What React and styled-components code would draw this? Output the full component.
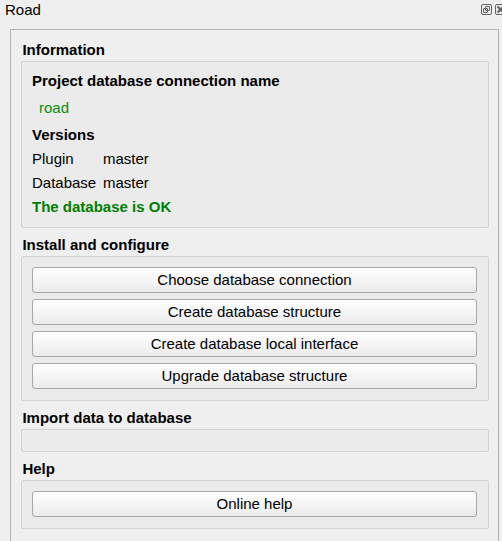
import React from "react";
import styled, { createGlobalStyle } from "styled-components";

const GlobalStyle = createGlobalStyle`
  * { box-sizing: border-box; }
  body {
    margin: 0;
    background: #efefef;
    color: #000;
    font: 15px/24px "Liberation Sans", Arial, sans-serif;
    overflow: hidden;
  }
`;

const Dock = styled.div`
  width: 502px;
  height: 541px;
  display: flex;
  flex-direction: column;
  overflow: hidden;
  background: #efefef;
`;

const TitleBar = styled.header`
  flex: none;
  height: 29px;
  padding: 0 0 0 5px;
  display: flex;
  align-items: flex-start;
  justify-content: space-between;
  overflow: hidden;
`;

const Title = styled.span`
  line-height: 20px;
`;

const Controls = styled.div`
  width: 21px;
  margin-top: 4px;
  display: flex;
  gap: 3px;
  overflow: hidden;
`;

const ControlIcon = styled.svg`
  flex: none;
  display: block;
  width: 11px;
  height: 11px;
`;

const Frame = styled.main`
  flex: none;
  width: 489px;
  height: 530px;
  margin-left: 10px;
  padding: 8px 9px 0 10px;
  border: 1px solid #b3b3b3;
`;

const Section = styled.section`
  margin-bottom: ${(p) => p.$gap}px;
`;

const SectionTitle = styled.h2`
  margin: 0;
  padding-left: 1.4px;
  height: 23px;
  font-size: 15px;
  line-height: 24px;
  font-weight: bold;
`;

const GroupBox = styled.div`
  height: ${(p) => p.$height}px;
  padding: ${(p) => p.$top || 10}px 11px 0 10px;
  display: flex;
  flex-direction: column;
  gap: ${(p) => p.$gap || 0}px;
  border: 1px solid #d3d3d3;
  border-radius: 2px;
  background: #ebebeb;
`;

const Label = styled.strong`
  height: ${(p) => p.$height || 24}px;
  color: ${(p) => (p.$ok ? "#008000" : "#000")};
`;

const ConnectionName = styled.span`
  height: 27px;
  padding-left: 7px;
  color: #0b8c0b;
`;

const Versions = styled.div`
  display: grid;
  grid-template-columns: 71px auto;
  grid-auto-rows: 24px;
`;

const Button = styled.button`
  flex: none;
  width: 100%;
  height: 26px;
  padding: 0;
  border: 1px solid #a8a8a8;
  border-radius: 3px;
  background: linear-gradient(#ffffff, #ebebeb);
  color: #000;
  font: 15px/24px "Liberation Sans", Arial, sans-serif;
  text-align: center;
`;

const FloatIcon = () => (
  <ControlIcon viewBox="0 0 11 11" fill="none" stroke="#64635f">
    <rect x="0.5" y="0.5" width="10" height="10" rx="1.5" />
    <rect x="4.5" y="2.5" width="4" height="4" rx="0.5" />
    <rect x="2.5" y="4.5" width="4" height="4" rx="0.5" />
  </ControlIcon>
);

const CloseIcon = () => (
  <ControlIcon viewBox="0 0 11 11" fill="none" stroke="#64635f">
    <rect x="0.5" y="0.5" width="10" height="10" rx="1.5" />
    <path d="M2.5 2.5 8.5 8.5M8.5 2.5 2.5 8.5" strokeWidth="2.2" />
  </ControlIcon>
);

const actions = [
  "Choose database connection",
  "Create database structure",
  "Create database local interface",
  "Upgrade database structure",
];

export default function App() {
  return (
    <Dock>
      <GlobalStyle />
      <TitleBar>
        <Title>Road</Title>
        <Controls>
          <FloatIcon />
          <CloseIcon />
        </Controls>
      </TitleBar>
      <Frame>
        <Section $gap={5}>
          <SectionTitle>Information</SectionTitle>
          <GroupBox $height={167} $top={7}>
            <Label $height={27}>Project database connection name</Label>
            <ConnectionName>road</ConnectionName>
            <Label>Versions</Label>
            <Versions>
              <span>Plugin</span>
              <span>master</span>
              <span>Database</span>
              <span>master</span>
            </Versions>
            <Label $ok>The database is OK</Label>
          </GroupBox>
        </Section>
        <Section $gap={5}>
          <SectionTitle>Install and configure</SectionTitle>
          <GroupBox $height={145} $gap={6}>
            {actions.map((text) => (
              <Button key={text}>{text}</Button>
            ))}
          </GroupBox>
        </Section>
        <Section $gap={5}>
          <SectionTitle>Import data to database</SectionTitle>
          <GroupBox $height={23} />
        </Section>
        <Section $gap={0}>
          <SectionTitle>Help</SectionTitle>
          <GroupBox $height={49}>
            <Button>Online help</Button>
          </GroupBox>
        </Section>
      </Frame>
    </Dock>
  );
}
